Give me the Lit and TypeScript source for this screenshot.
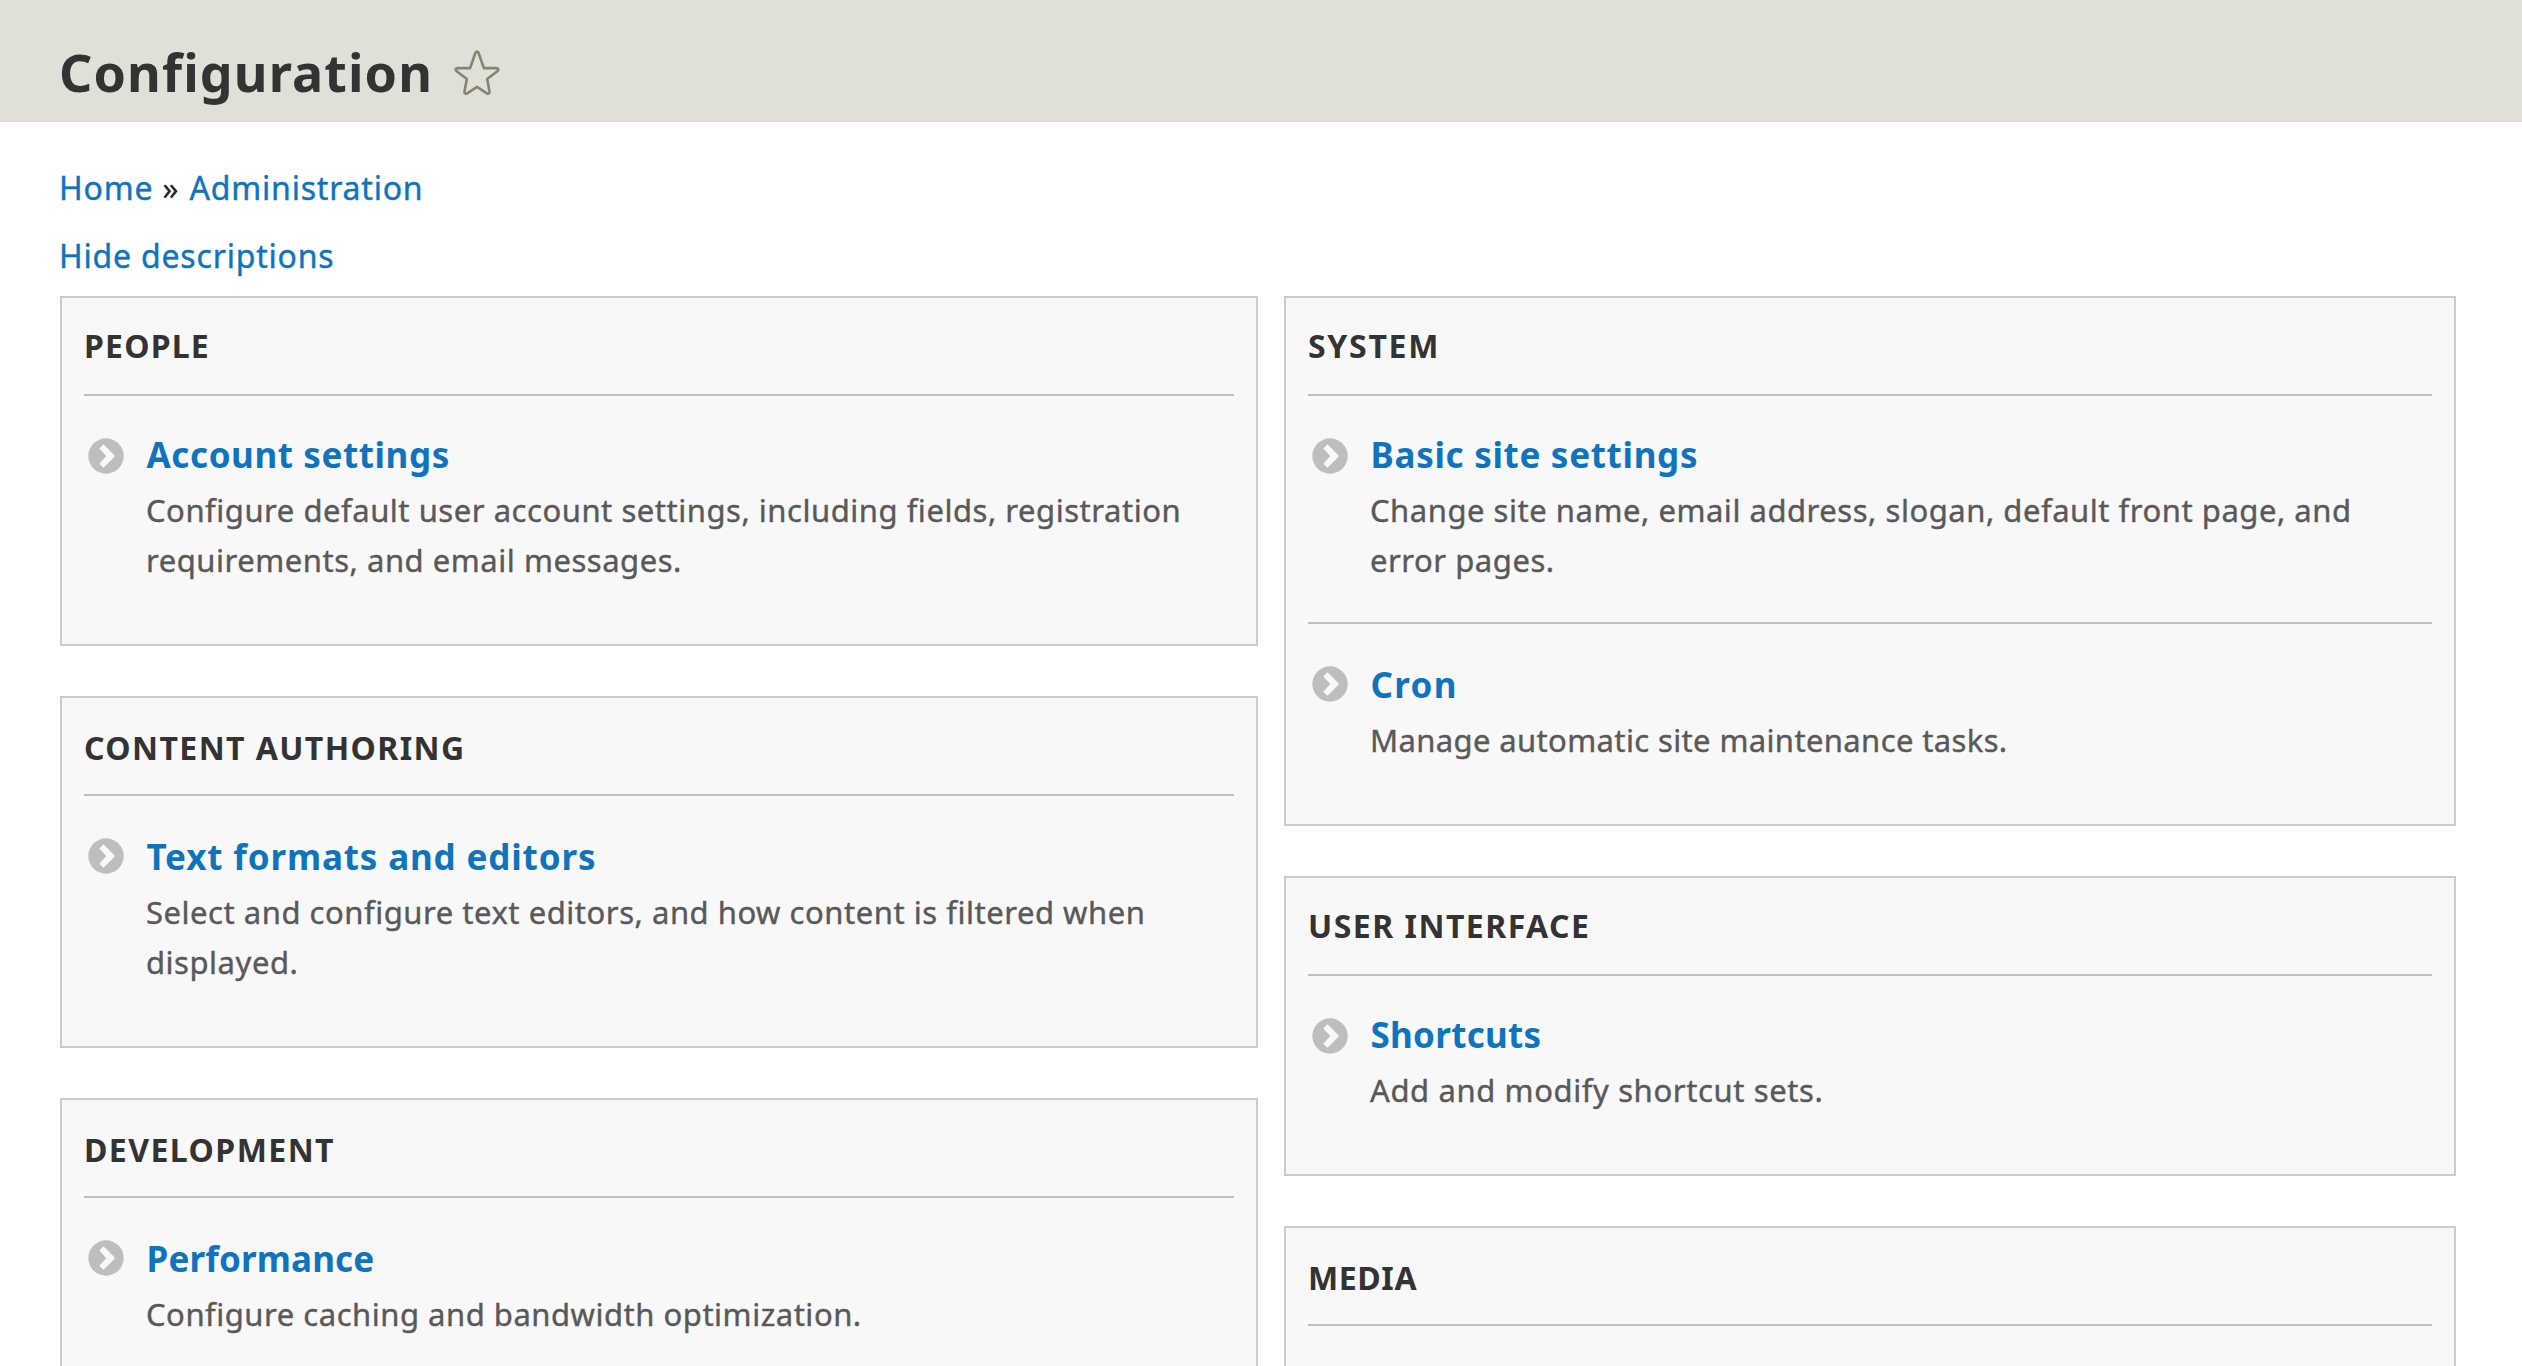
import { LitElement, html, css, svg } from "lit";
import { customElement, property } from "lit/decorators.js";
import { classMap } from "lit/directives/class-map.js";
import { styleMap } from "lit/directives/style-map.js";

interface Entry {
  title: string;
  titleTracking: number;
  description: string;
  tracking: number;
  low?: boolean;
}

interface Panel {
  heading: string;
  tracking: number;
  low?: boolean;
  entries: Entry[];
}

const LEFT: Panel[] = [
  {
    heading: "People",
    tracking: 1.2,
    entries: [
      {
        title: "Account settings",
        titleTracking: 0.6,
        description:
          "Configure default user account settings, including fields, registration requirements, and email messages.",
        tracking: 0.53,
      },
    ],
  },
  {
    heading: "Content authoring",
    tracking: 1.41,
    low: true,
    entries: [
      {
        title: "Text formats and editors",
        titleTracking: 0.86,
        description:
          "Select and configure text editors, and how content is filtered when displayed.",
        tracking: 0.53,
        low: true,
      },
    ],
  },
  {
    heading: "Development",
    tracking: 1.45,
    low: true,
    entries: [
      {
        title: "Performance",
        titleTracking: 0.16,
        description: "Configure caching and bandwidth optimization.",
        tracking: 0.52,
        low: true,
      },
    ],
  },
];

const RIGHT: Panel[] = [
  {
    heading: "System",
    tracking: 1.7,
    entries: [
      {
        title: "Basic site settings",
        titleTracking: 0.7,
        description:
          "Change site name, email address, slogan, default front page, and error pages.",
        tracking: 0.53,
      },
      {
        title: "Cron",
        titleTracking: 1.3,
        description: "Manage automatic site maintenance tasks.",
        tracking: 0.37,
        low: true,
      },
    ],
  },
  {
    heading: "User interface",
    tracking: 1.48,
    entries: [
      {
        title: "Shortcuts",
        titleTracking: 0.28,
        description: "Add and modify shortcut sets.",
        tracking: 0.61,
      },
    ],
  },
  { heading: "Media", tracking: 0.61, low: true, entries: [] },
];

const spacing = (px: number) => styleMap({ letterSpacing: `${px}px` });

@customElement("config-panel")
class ConfigPanel extends LitElement {
  @property({ attribute: false }) panel!: Panel;

  static styles = css`
    :host {
      display: block;
      box-sizing: border-box;
      border: 2px solid #ccc;
      background: #f8f8f8;
      padding: 0 22px 22px;
    }
    .heading {
      margin: 0;
      padding: 24px 0;
      font-size: 32px;
      line-height: 48px;
      font-weight: 700;
      text-transform: uppercase;
      color: #333;
    }
    .heading.low {
      padding: 26px 0 22px;
    }
    .list {
      margin: 0;
      padding: 0;
      list-style: none;
      border-top: 2px solid #bfbfbf;
      min-height: 60px;
    }
    .entry {
      display: flex;
      align-items: flex-start;
      gap: 22px;
      padding: 0 0 37px 4px;
    }
    .entry + .entry {
      border-top: 2px solid #bfbfbf;
    }
    .icon {
      flex: none;
      width: 36px;
      height: 36px;
      margin-top: 42px;
    }
    .text {
      flex: 1;
      padding-top: 34px;
    }
    .low .text {
      padding-top: 36px;
    }
    .title {
      display: block;
      padding-left: 0.5px;
      font-size: 35px;
      line-height: 50px;
      font-weight: 700;
      color: #0f74bd;
      text-decoration: none;
    }
    .description {
      margin-top: 5px;
      font-size: 31px;
      line-height: 50px;
      color: #595959;
      -webkit-text-stroke: 0.4px currentColor;
    }
  `;

  private renderEntry(entry: Entry) {
    return html`<li class=${classMap({ entry: true, low: !!entry.low })}>
      <svg class="icon" viewBox="0 0 36 36" aria-hidden="true">
        ${svg`<circle cx="18" cy="18" r="17.7" fill="#bebebe" />
        <path d="M12.4 10.5 15.5 7.4 26 18.1 15.5 28.8 12.4 25.7 19.4 18.1Z"
          fill="#f8f8f8" stroke="#f8f8f8" stroke-width="1.6" stroke-linejoin="round" />`}
      </svg>
      <div class="text">
        <a class="title" style=${spacing(entry.titleTracking)}>${entry.title}</a>
        <div class="description" style=${spacing(entry.tracking)}>${entry.description}</div>
      </div>
    </li>`;
  }

  render() {
    const { heading, tracking, low, entries } = this.panel;
    return html`
      <h3 class=${classMap({ heading: true, low: !!low })} style=${spacing(tracking)}>${heading}</h3>
      <ul class="list">${entries.map((e) => this.renderEntry(e))}</ul>
    `;
  }
}

@customElement("app-root")
class AppRoot extends LitElement {
  static styles = css`
    :host {
      display: block;
      height: 100vh;
      overflow: hidden;
      background: #fff;
      font-family: "Noto Sans", "Open Sans", sans-serif;
      color: #333;
    }
    .header {
      display: flex;
      align-items: flex-start;
      box-sizing: border-box;
      height: 122px;
      padding: 42px 59px 0;
      background: #e0e0d8;
    }
    .page-title {
      margin: 0;
      font-size: 52px;
      line-height: 60px;
      font-weight: 700;
      letter-spacing: 1.1px;
    }
    .star {
      flex: none;
      width: 50px;
      height: 50px;
      margin: 6px 0 0 19px;
    }
    .content {
      padding: 42px 59px 0;
      font-size: 32px;
      line-height: 48px;
    }
    .breadcrumb {
      display: flex;
      margin-bottom: 20px;
    }
    .link {
      color: #0f74bd;
      text-decoration: none;
      letter-spacing: 0.8px;
      -webkit-text-stroke: 0.4px currentColor;
    }
    .separator {
      margin: 0 11px 0 9px;
      color: #222;
    }
    .columns {
      display: grid;
      grid-template-columns: 1198px 1172px;
      column-gap: 26px;
      align-items: start;
      margin: 16px 0 0 1px;
    }
    .column {
      display: flex;
      flex-direction: column;
      gap: 50px;
    }
  `;

  private renderColumn(panels: Panel[]) {
    return html`<div class="column">
      ${panels.map((p) => html`<config-panel .panel=${p}></config-panel>`)}
    </div>`;
  }

  render() {
    return html`
      <header class="header">
        <h1 class="page-title">Configuration</h1>
        <svg class="star" viewBox="0 0 50 50" aria-hidden="true">
          <path
            d="M23.5 4.7Q25 2.2 26.5 4.7L31.9 20.1H44.6Q47.6 20.6 45.6 23L35.2 31 37.5 43.5Q37.6 46.6 34.8 45.3L25 38.9 15.2 45.3Q12.4 46.6 12.5 43.5L14.8 31 4.4 23Q2.4 20.6 5.4 20.1H18.1Z"
            fill="none"
            stroke="#86846f"
            stroke-width="2.6"
            stroke-linejoin="round"
          />
        </svg>
      </header>
      <main class="content">
        <nav class="breadcrumb">
          <a class="link">Home</a><span class="separator">»</span><a class="link">Administration</a>
        </nav>
        <a class="link">Hide descriptions</a>
        <div class="columns">${this.renderColumn(LEFT)}${this.renderColumn(RIGHT)}</div>
      </main>
    `;
  }
}
